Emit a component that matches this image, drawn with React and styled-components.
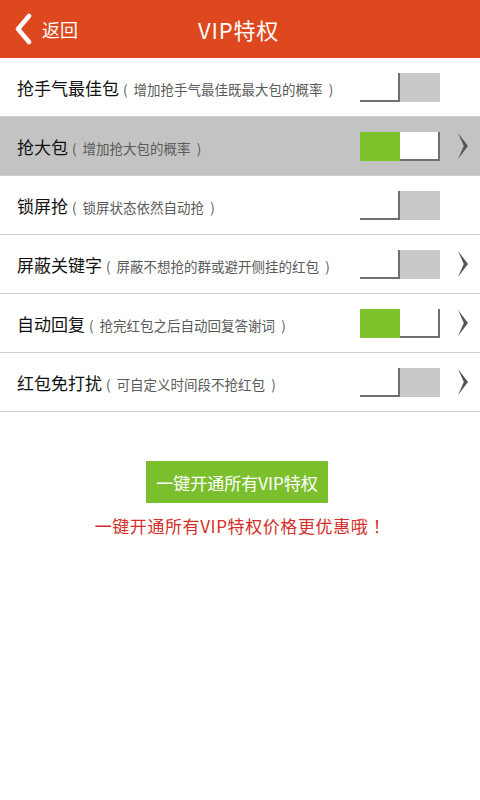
import React from "react";
import styled, { createGlobalStyle } from "styled-components";

const GlobalStyle = createGlobalStyle`
  html, body {
    margin: 0;
    padding: 0;
    background: #fff;
  }
  body {
    font-family: "Noto Sans CJK SC", "Noto Sans", sans-serif;
  }
`;

const Page = styled.div`
  width: 480px;
  min-height: 800px;
  background: #fff;
`;

const Header = styled.header`
  position: relative;
  height: 58px;
  background: #de481e;
  display: flex;
  align-items: center;
  justify-content: center;
  color: #fff;
`;

const Back = styled.div`
  position: absolute;
  left: 14px;
  top: 0;
  height: 58px;
  display: flex;
  align-items: center;
  gap: 8px;
  font-size: 18px;
`;

const Title = styled.h1`
  margin: 0 0 0 -3px;
  font-size: 22px;
  font-weight: 400;
  letter-spacing: 0.8px;
`;

const List = styled.ul`
  list-style: none;
  margin: 0;
  padding: 0;
`;

const Row = styled.li`
  height: 58px;
  border-bottom: 1px solid #cfcfcf;
  background: ${(p) => (p.$active ? "#c3c3c3" : "#fff")};
  display: flex;
  align-items: center;
  padding: 0 0 0 17px;
`;

const Label = styled.div`
  flex: 1;
  display: flex;
  align-items: baseline;
  white-space: nowrap;
`;

const Name = styled.span`
  font-size: 17px;
  color: #111;
`;

const Hint = styled.span`
  font-size: 13.5px;
  color: #5a5a5a;
  margin-left: 4px;
  white-space: pre;
`;

const Toggle = styled.div`
  display: flex;
  width: 80px;
  height: 29px;
  margin-right: 17px;
`;

const Half = styled.div`
  flex: 1;
  background: ${(p) => p.$color};
  box-shadow: ${(p) =>
    p.$knob ? "inset -2px -2px 0 #707070" : "none"};
`;

const Arrow = styled.div`
  width: 23px;
  display: flex;
  align-items: center;
  justify-content: flex-start;
`;

const Footer = styled.div`
  display: flex;
  flex-direction: column;
  align-items: center;
  padding-top: 49px;
`;

const OpenButton = styled.button`
  width: 182px;
  height: 42px;
  margin-left: -6px;
  border: none;
  background: #7bbf2d;
  color: #fff;
  font-family: inherit;
  font-size: 17px;
  padding: 0;
`;

const Promo = styled.p`
  margin: 10px 0 0 5px;
  font-size: 17px;
  color: #d32f2a;
  letter-spacing: 0.6px;
`;

const items = [
  { name: "抢手气最佳包", hint: "( 增加抢手气最佳既最大包的概率 )", on: false, arrow: false },
  { name: "抢大包", hint: "( 增加抢大包的概率 )", on: true, arrow: true, active: true },
  { name: "锁屏抢", hint: "( 锁屏状态依然自动抢 )", on: false, arrow: false },
  { name: "屏蔽关键字", hint: "( 屏蔽不想抢的群或避开侧挂的红包 )", on: false, arrow: true },
  { name: "自动回复", hint: "( 抢完红包之后自动回复答谢词 )", on: true, arrow: true },
  { name: "红包免打扰", hint: "( 可自定义时间段不抢红包 )", on: false, arrow: true },
];

const Switch = ({ on }) =>
  on ? (
    <Toggle>
      <Half $color="#7dc22a" />
      <Half $color="#fff" $knob />
    </Toggle>
  ) : (
    <Toggle>
      <Half $color="#fff" $knob />
      <Half $color="#c9c9c9" />
    </Toggle>
  );

const Chevron = () => (
  <svg width="12" height="28" viewBox="0 0 12 28">
    <path d="M1 1 L11 14 L1 27 L6.8 14 Z" fill="#555" />
  </svg>
);

export default function App() {
  return (
    <Page>
      <GlobalStyle />
      <Header>
        <Back>
          <svg width="20" height="32" viewBox="0 0 20 32">
            <path
              d="M15 3 L4 16 L15 29"
              fill="none"
              stroke="#fff"
              strokeWidth="4.5"
              strokeLinecap="round"
              strokeLinejoin="round"
            />
          </svg>
          <span>返回</span>
        </Back>
        <Title>VIP特权</Title>
      </Header>
      <List>
        {items.map((it) => (
          <Row key={it.name} $active={it.active}>
            <Label>
              <Name>{it.name}</Name>
              <Hint>{it.hint.replace("( ", "(  ").replace(" )", "  )")}</Hint>
            </Label>
            <Switch on={it.on} />
            <Arrow>{it.arrow && <Chevron />}</Arrow>
          </Row>
        ))}
      </List>
      <Footer>
        <OpenButton>一键开通所有VIP特权</OpenButton>
        <Promo>一键开通所有VIP特权价格更优惠哦 ！</Promo>
      </Footer>
    </Page>
  );
}
